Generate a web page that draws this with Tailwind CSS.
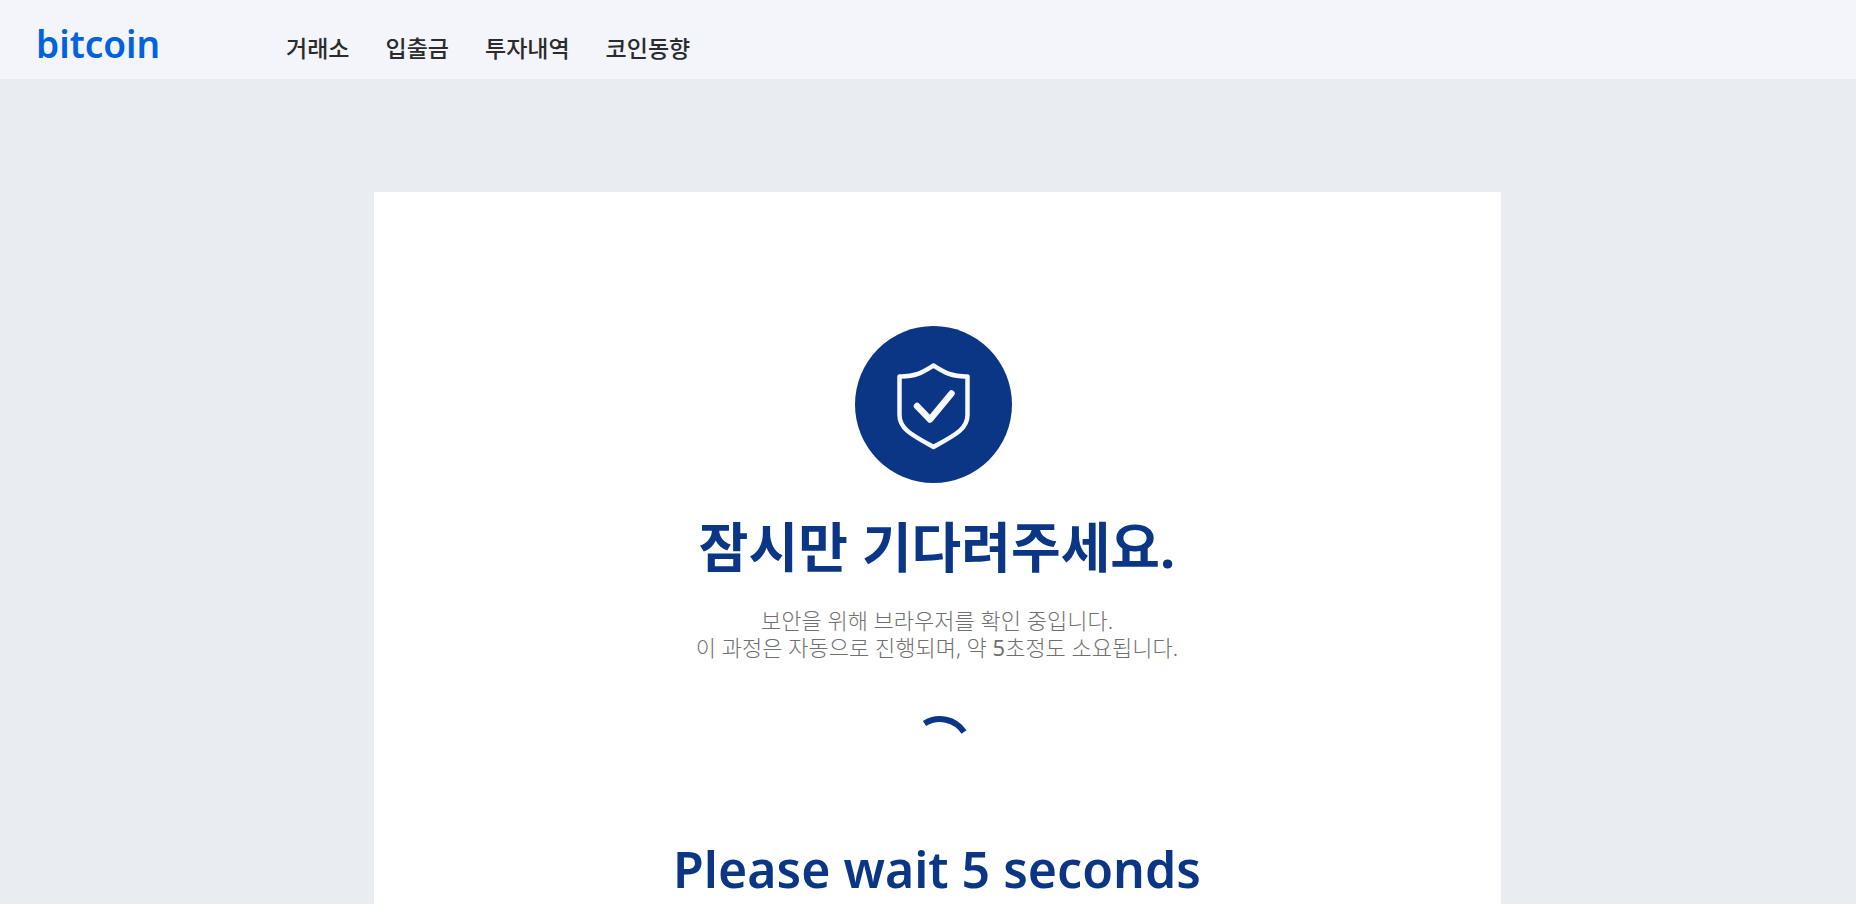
<!DOCTYPE html>
<html lang="ko">
<head>
  <meta charset="UTF-8">
  <meta name="viewport" content="width=device-width, initial-scale=1.0">
  <title>bitcoin</title>
  <script src="https://cdn.jsdelivr.net/npm/@tailwindcss/browser@4"></script>
</head>
<body class="min-h-screen bg-[#e9ecf1] font-['Noto_Sans','Noto_Sans_CJK_KR',sans-serif]">
  <header class="flex h-[79px] items-center bg-[#f3f5fa] pl-9">
    <a href="#" class="w-[250px] pt-2 text-[37px] leading-10 font-semibold text-[#0062df]">bitcoin</a>
    <nav class="flex gap-9 pt-4 text-[23px] leading-8 font-medium text-[#2b2b2b]">
      <a href="#">거래소</a>
      <a href="#">입출금</a>
      <a href="#">투자내역</a>
      <a href="#">코인동향</a>
    </nav>
  </header>

  <div class="pl-[18px]">
    <main class="mx-auto mt-[113px] flex min-h-[800px] w-full max-w-[1127px] flex-col items-center bg-white pt-[134px] text-center text-[#0a3685]">
      <!-- shield -->
      <svg class="mr-2 size-[157px]" viewBox="0 0 157 157" fill="none" stroke="#f7f9ff" stroke-linecap="round" stroke-linejoin="round">
        <circle cx="78.5" cy="78.5" r="78.5" fill="#0a3685" stroke="none"/>
        <path d="M78.500 39.500 C68 46 61 51 44.500 50.500 V89 C44.500 103 57 109 78.500 121 C100 109 112.500 103 112.500 89 V50.500 C96 51 89 46 78.500 39.500 Z" stroke-width="4.500"/>
        <path d="M62 80 L75 93.500 L96.500 67.500" stroke-width="6.500"/>
      </svg>

      <h1 class="mt-6 text-[54px] leading-20 font-bold">잠시만 기다려주세요.</h1>
      <p class="mt-5 text-[22px] leading-[27px] font-light text-[#707070]">
        보안을 위해 브라우저를 확인 중입니다.<br>
        이 과정은 자동으로 진행되며, 약 <span class="font-normal">5</span>초정도 소요됩니다.
      </p>

      <!-- spinner -->
      <svg class="mt-12 size-20" viewBox="0 0 80 80" fill="none" stroke="#0a3685" stroke-width="6">
        <path d="M27.500 14.500 A29 29 0 0 1 67 23"/>
      </svg>

      <h2 class="mt-10 text-[50px] leading-20 font-semibold">Please wait 5 seconds</h2>
    </main>
  </div>
</body>
</html>
